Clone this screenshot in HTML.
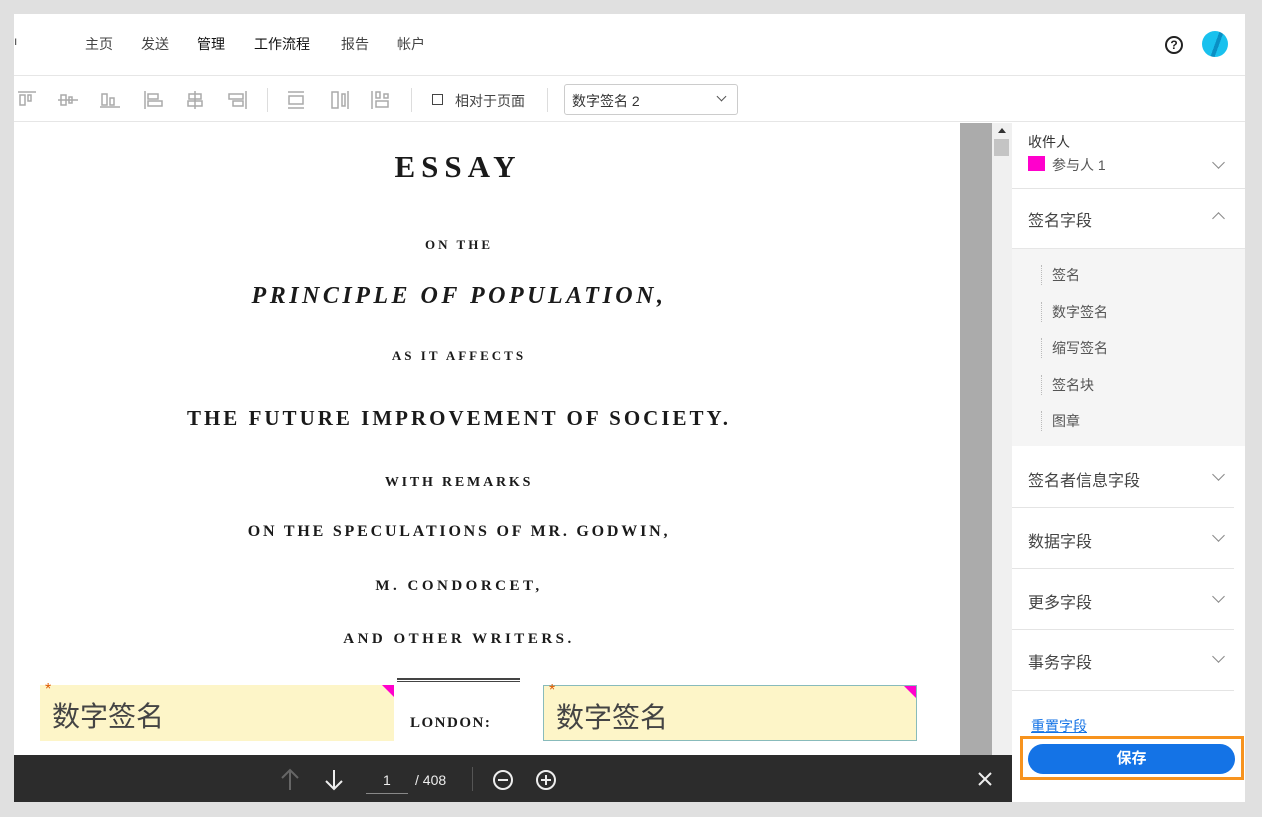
<!DOCTYPE html>
<html><head><meta charset="utf-8"><style>
*{box-sizing:border-box;margin:0;padding:0}
body{width:1262px;height:817px;background:#e0e0e0;font-family:"Liberation Sans","Noto Sans CJK SC",sans-serif;position:relative;overflow:hidden}
.frame{position:absolute;left:14px;top:14px;width:1231px;height:788px;background:#fff}
.hdr{position:absolute;left:0;top:0;width:1231px;height:62px;border-bottom:1px solid #e6e6e6}
.nav{position:absolute;top:20px;font-size:14px;color:#444}
.tb{position:absolute;left:0;top:62px;width:1231px;height:46px;border-bottom:1px solid #e6e6e6}
.doc{position:absolute;left:0;top:109px;width:946px;height:632px;background:#fff;overflow:hidden;font-family:"Liberation Serif",serif;color:#1a1a1a;text-align:center;font-weight:bold}
.t{position:absolute;left:0;width:890px;text-align:center;letter-spacing:2px}
.gray{position:absolute;left:946px;top:109px;width:32px;height:632px;background:#ababab}
.track{position:absolute;left:978px;top:109px;width:20px;height:632px;background:#f0f0f0}
.side{position:absolute;left:998px;top:109px;width:233px;height:679px;background:#fff}
.sec{position:absolute;left:16px;font-size:16px;color:#444}
.chev{position:absolute;right:22px;width:9px;height:9px;border-right:1.5px solid #888;border-bottom:1.5px solid #888;transform:rotate(45deg)}
.hl{position:absolute;left:0;width:222px;height:1px;background:#e4e4e4}
.sub{position:absolute;left:40px;font-size:14px;color:#555;border-left:1px dotted #bbb;padding-left:10px;margin-left:-11px}
.bar{position:absolute;left:0;top:741px;width:998px;height:47px;background:#2c2c2c;color:#eee}
.fld{position:absolute;top:671px;height:56px;background:#fdf5c8;font-size:28px;color:#444;padding:10px 0 0 12px;font-family:"Liberation Sans","Noto Sans CJK SC",sans-serif}
.fld:after{content:"";position:absolute;right:0;top:0;border-top:12px solid #f0c;border-left:12px solid transparent}
.star{position:absolute;left:5px;top:-4px;color:#e05a00;font-size:16px}
</style></head><body>
<div class="frame">
 <div class="hdr">
  <span class="nav" style="left:0;font-size:12px">ı</span>
  <span class="nav" style="left:71px">主页</span>
  <span class="nav" style="left:127px">发送</span>
  <span class="nav" style="left:183px;color:#111">管理</span>
  <span class="nav" style="left:240px;color:#111">工作流程</span>
  <span class="nav" style="left:327px">报告</span>
  <span class="nav" style="left:383px">帐户</span>
  <div style="position:absolute;left:1151px;top:22px;width:18px;height:18px;border:2px solid #222;border-radius:50%;font-size:12px;font-weight:bold;text-align:center;line-height:14px;color:#222">?</div>
  <div style="position:absolute;left:1188px;top:17px;width:26px;height:26px;border-radius:50%;background:linear-gradient(110deg,#19c1ee 50%,#0a8fc4 50%,#0a8fc4 62%,#19c1ee 62%)"></div>
 </div>
 <div class="tb">
  <svg style="position:absolute;left:0;top:12px" width="240" height="24" stroke="#aaa" fill="none" stroke-width="1.5">
   <path d="M4 4h18M6 7h5v10H6zM14 7h3v6h-3z"/>
   <path d="M44 12h20M47 7h5v10h-5zM55 9h3v6h-3z"/>
   <path d="M86 19h20M88 6h5v11h-5zM96 10h4v7h-4z"/>
   <path d="M131 3v18M134 6h10v5h-10zM134 13h14v5h-14z"/>
   <path d="M181 3v18M175 6h12v5h-12zM174 13h14v5h-14z"/>
   <path d="M232 3v18M215 6h14v5h-14zM219 13h10v5h-10z"/>
  </svg>
  <div style="position:absolute;left:253px;top:12px;width:1px;height:24px;background:#ddd"></div>
  <svg style="position:absolute;left:270px;top:12px" width="120" height="24" stroke="#aaa" fill="none" stroke-width="1.5">
   <path d="M4 4h16M4 20h16M5 8h14v8H5z"/>
   <path d="M48 4h6v16h-6zM58 6h3v12h-3zM64 3v18"/>
   <path d="M88 3v18M92 4h4v6h-4zM92 13h12v6H92zM100 6h4v4h-4z"/>
  </svg>
  <div style="position:absolute;left:397px;top:12px;width:1px;height:24px;background:#ddd"></div>
  <div style="position:absolute;left:418px;top:18px;width:11px;height:11px;border:1.5px solid #444"></div>
  <span style="position:absolute;left:441px;top:15px;font-size:14px;color:#444">相对于页面</span>
  <div style="position:absolute;left:533px;top:12px;width:1px;height:24px;background:#ddd"></div>
  <div style="position:absolute;left:550px;top:8px;width:174px;height:31px;border:1px solid #ccc;border-radius:3px;font-size:14px;color:#333;padding:6px 0 0 7px">数字签名 2
   <div style="position:absolute;right:12px;top:8px;width:7px;height:7px;border-right:1.5px solid #555;border-bottom:1.5px solid #555;transform:rotate(45deg)"></div></div>
 </div>
 <div class="doc">
  <div class="t" style="top:26px;font-size:31px;letter-spacing:6px;left:0;width:888px">ESSAY</div>
  <div class="t" style="top:114px;font-size:13px;letter-spacing:3px">ON THE</div>
  <div class="t" style="top:160px;font-size:24px;font-style:italic;letter-spacing:3.5px">PRINCIPLE OF POPULATION,</div>
  <div class="t" style="top:225px;font-size:13px;letter-spacing:3px">AS IT AFFECTS</div>
  <div class="t" style="top:283px;font-size:21px;letter-spacing:3px">THE FUTURE IMPROVEMENT OF SOCIETY.</div>
  <div class="t" style="top:352px;font-size:14px;letter-spacing:2.8px">WITH REMARKS</div>
  <div class="t" style="top:400px;font-size:16px;letter-spacing:2.8px">ON THE SPECULATIONS OF MR. GODWIN,</div>
  <div class="t" style="top:455px;font-size:15px;letter-spacing:3.5px">M. CONDORCET,</div>
  <div class="t" style="top:508px;font-size:15px;letter-spacing:3.5px">AND OTHER WRITERS.</div>
  <div style="position:absolute;left:383px;top:555px;width:123px;height:4px;border-top:2px solid #444;border-bottom:1px solid #444"></div>
  <div style="position:absolute;left:396px;top:592px;font-size:15px;letter-spacing:1.5px">LONDON:</div>
 </div>
 <div class="fld" style="left:26px;width:354px"><span class="star">*</span>数字签名</div>
 <div class="fld" style="left:529px;width:374px;border:1px solid #8bb;"><span class="star">*</span>数字签名</div>
 <div class="gray"></div>
 <div class="track"><div style="position:absolute;left:6px;top:5px;border-bottom:5px solid #333;border-left:4px solid transparent;border-right:4px solid transparent"></div>
  <div style="position:absolute;left:2px;top:16px;width:15px;height:17px;background:#c4c4c4"></div></div>
 <div class="side">
  <div class="sec" style="top:9px;font-size:14px;color:#333">收件人</div>
  <div style="position:absolute;left:16px;top:33px;width:17px;height:15px;background:#f0c"></div>
  <div class="sec" style="left:40px;top:32px;font-size:14px;color:#555">参与人 1</div>
  <div class="chev" style="top:35px"></div>
  <div class="hl" style="top:65px;width:233px"></div>
  <div class="sec" style="top:84px">签名字段</div>
  <div class="chev" style="top:91px;transform:rotate(225deg)"></div>
  <div style="position:absolute;left:0;top:125px;width:233px;height:198px;background:#f5f5f5;border-top:1px solid #e6e6e6"></div>
  <div class="sub" style="top:142px">签名</div>
  <div class="sub" style="top:179px">数字签名</div>
  <div class="sub" style="top:215px">缩写签名</div>
  <div class="sub" style="top:252px">签名块</div>
  <div class="sub" style="top:288px">图章</div>
  <div class="sec" style="top:344px">签名者信息字段</div><div class="chev" style="top:347px"></div>
  <div class="hl" style="top:384px"></div>
  <div class="sec" style="top:405px">数据字段</div><div class="chev" style="top:408px"></div>
  <div class="hl" style="top:445px"></div>
  <div class="sec" style="top:466px">更多字段</div><div class="chev" style="top:469px"></div>
  <div class="hl" style="top:506px"></div>
  <div class="sec" style="top:526px">事务字段</div><div class="chev" style="top:529px"></div>
  <div class="hl" style="top:567px"></div>
  <div style="position:absolute;left:19px;top:593px;font-size:14px;color:#1473e6;text-decoration:underline">重置字段</div>
  <div style="position:absolute;left:8px;top:613px;width:224px;height:44px;border:3px solid #f7931e"></div>
  <div style="position:absolute;left:16px;top:621px;width:207px;height:30px;background:#1473e6;border-radius:15px;color:#fff;font-size:15px;font-weight:bold;text-align:center;line-height:30px">保存</div>
 </div>
 <div class="bar">
  <svg style="position:absolute;left:265px;top:13px" width="300" height="24" fill="none" stroke-width="2">
   <path d="M11 22V3M3 10l8-8 8 8" stroke="#666"/>
   <path d="M55 2v19M47 13l8 8 8-8" stroke="#eee"/>
   <circle cx="224" cy="12" r="9" stroke="#eee"/><path d="M219 12h10" stroke="#eee"/>
   <circle cx="267" cy="12" r="9" stroke="#eee"/><path d="M262 12h10M267 7v10" stroke="#eee"/>
  </svg>
  <span style="position:absolute;left:369px;top:17px;font-size:14px">1</span>
  <div style="position:absolute;left:352px;top:38px;width:42px;height:1px;background:#888"></div>
  <span style="position:absolute;left:401px;top:17px;font-size:14px">/ 408</span>
  <div style="position:absolute;left:458px;top:12px;width:1px;height:24px;background:#555"></div>
  <svg style="position:absolute;left:963px;top:16px" width="16" height="16" stroke="#eee" stroke-width="2"><path d="M2 2l12 12M14 2L2 14"/></svg>
 </div>
</div>
</body></html>
